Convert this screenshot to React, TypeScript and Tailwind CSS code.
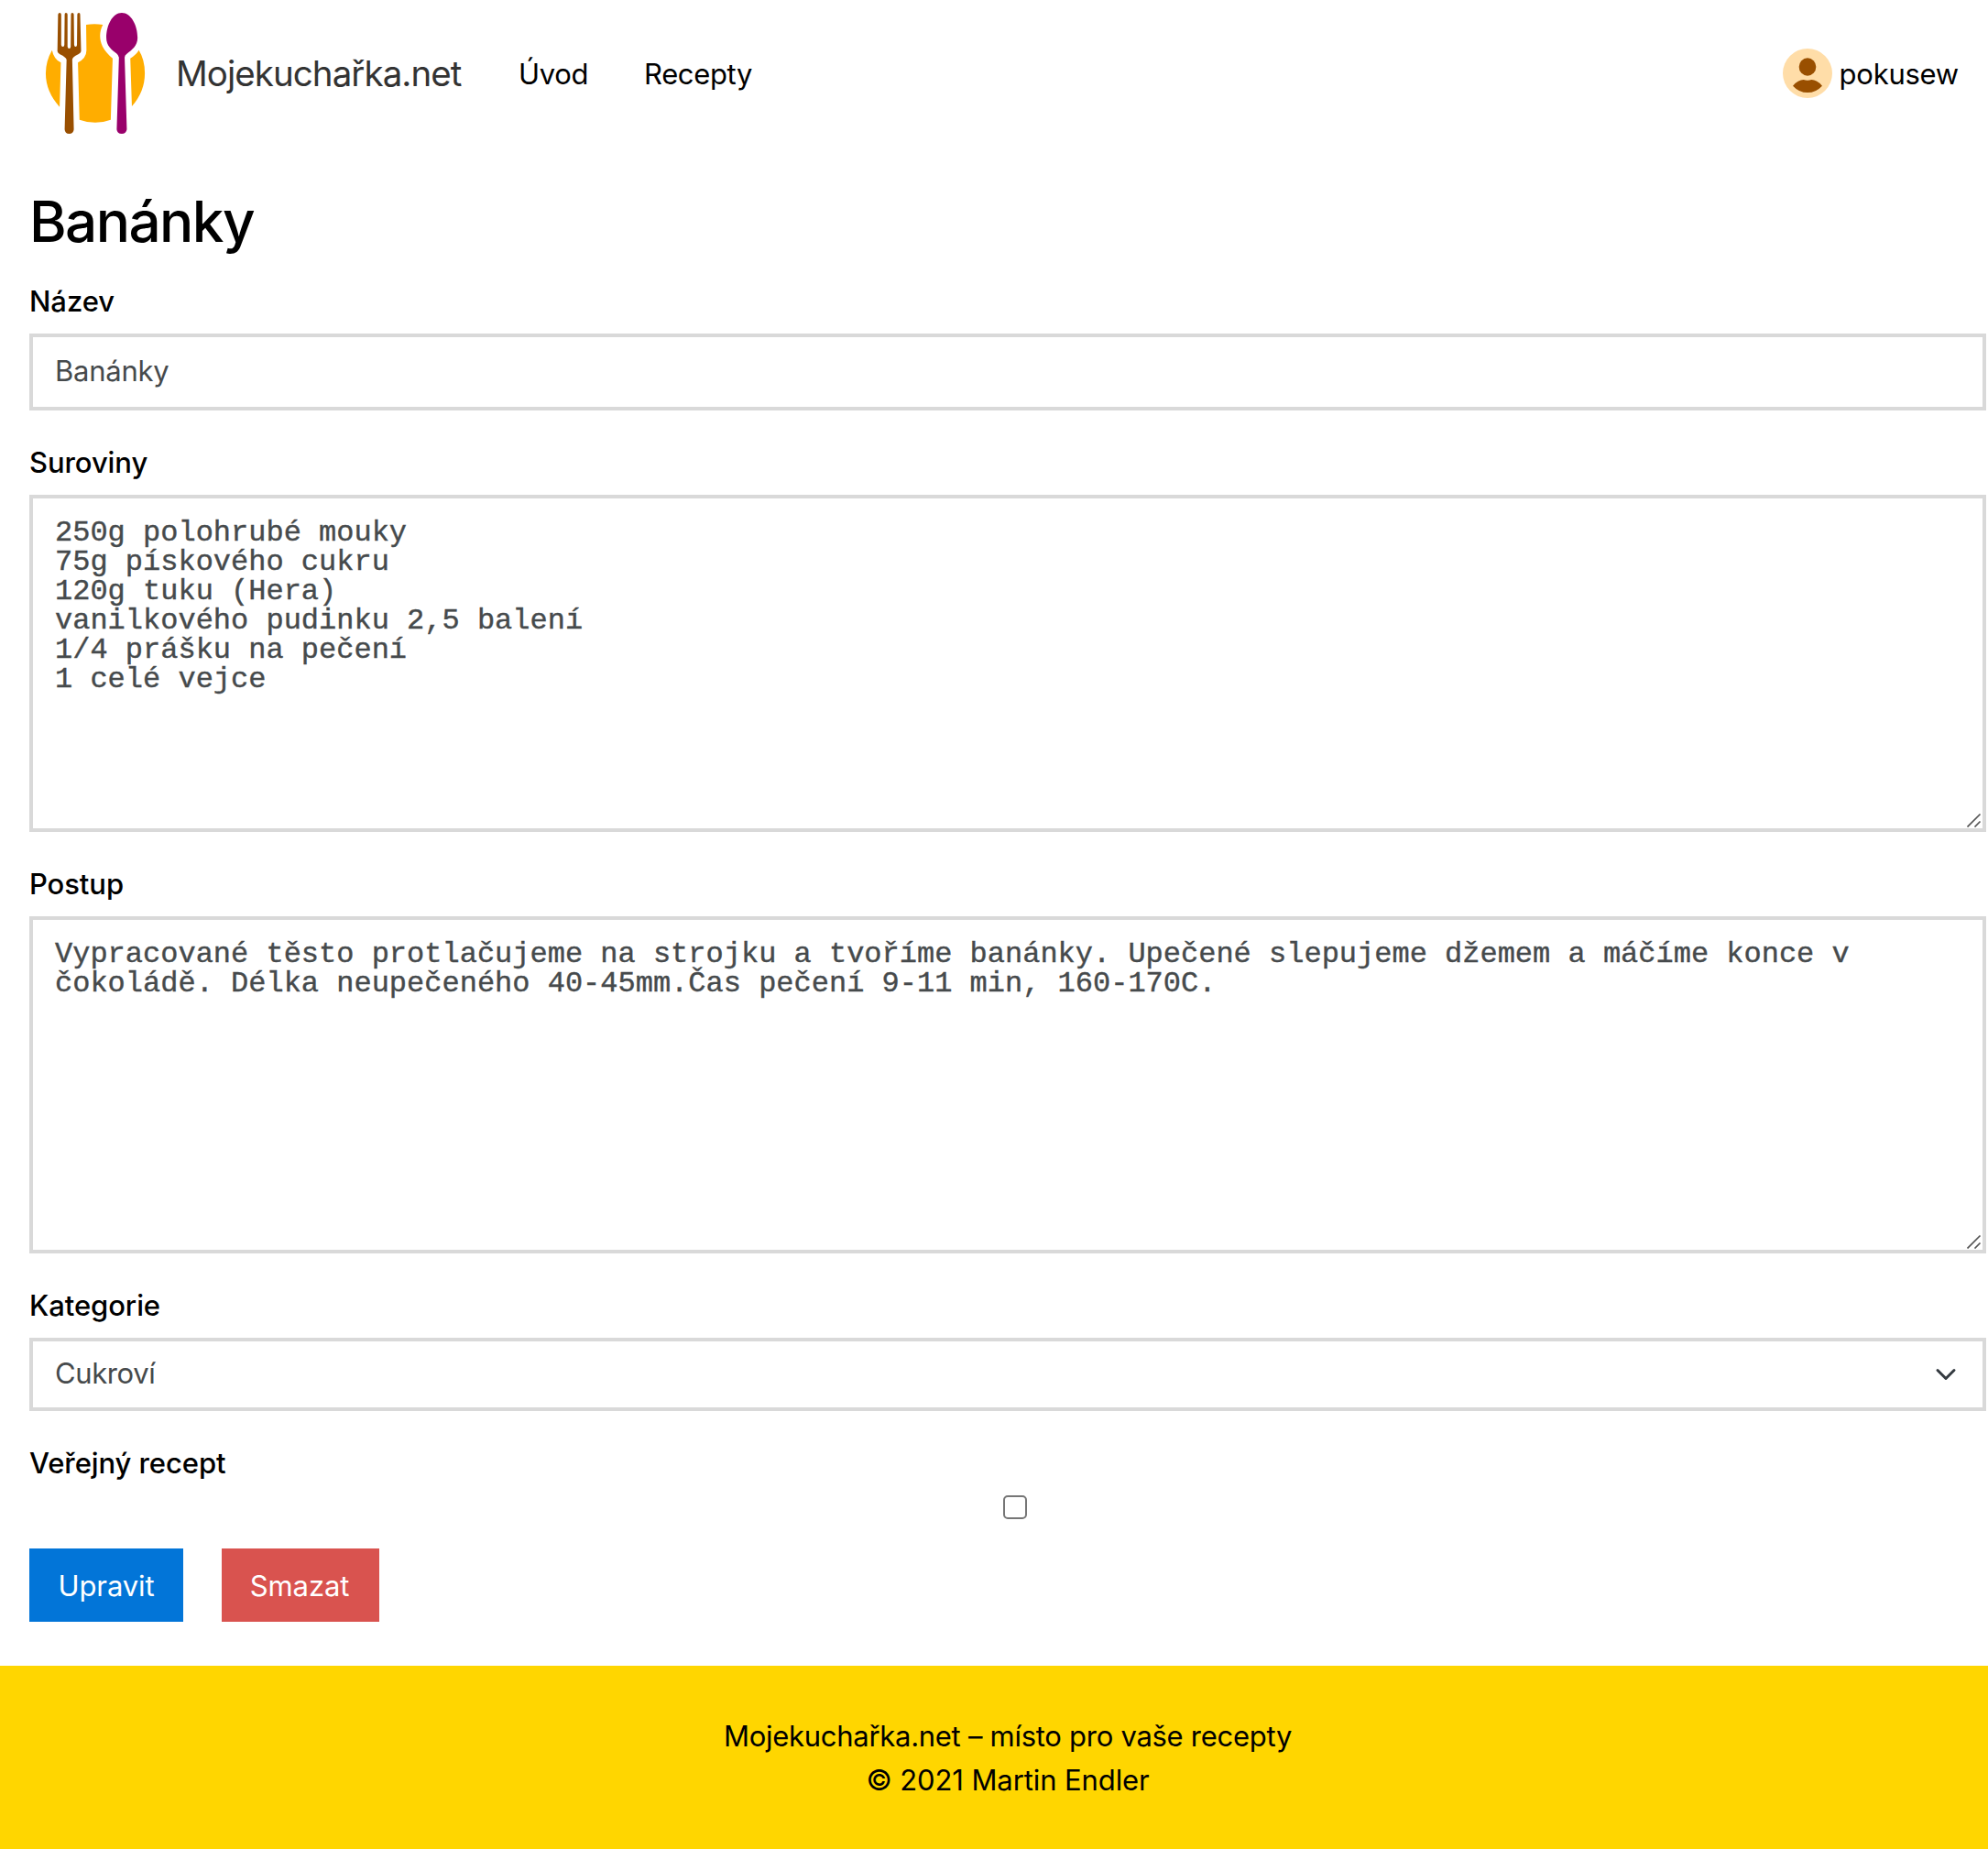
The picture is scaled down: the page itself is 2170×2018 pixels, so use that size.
import type { ReactNode } from 'react'

function Logo() {
  return (
    <svg className="block h-[136px] w-[112px] shrink-0" viewBox="48 12 112 136" aria-hidden="true">
      <g transform="scale(0.34439 0.33333)">
        <path fill="#ffad00" d="M165 164 Q145 200 145 240 Q145 300 189 350 L193 205 Q170 193 165 164 Z" />
        <path fill="#ffad00" d="M440 164 Q459 195 459 240 Q459 300 418 348 L413 191 Q433 178 440 164 Z" />
        <path fill="#ffad00" d="M273 81 Q299 76 326 81 C314 105 315 130 325 152 Q335 172 357 191 L351 392 Q302 411 252 392 L247 205 Q274 190 274 165 Z" />
        <path
          fill="#994f00"
          d="M184 47 Q185 42 189 42 Q194 42 194 47 L194 147 Q195 153 199 153 Q204 153 204 147 L205 47 Q205 42 209 42 Q214 42 214 47 L214 153 Q215 159 219 159 Q224 159 224 153 L225 47 Q225 42 229 42 Q234 42 234 47 L235 147 Q236 153 239 153 Q244 153 244 147 L245 47 Q245 42 250 42 Q254 42 254 47 L257 168 Q256 173 248 178 Q229 187 229 196 L234 424 Q233 438 219 438 Q206 438 205 424 L211 196 Q210 188 190 178 Q183 173 182 168 Z"
        />
        <path
          fill="#99006b"
          d="M386 42 C415 42 436 82 436 124 C436 150 418 164 402 176 Q395 181 395 188 L402 424 Q400 438 386 438 Q371 438 370 424 L377 188 Q376 181 369 175 C354 164 337 150 337 124 C337 82 357 42 386 42 Z"
        />
      </g>
    </svg>
  )
}

function Avatar() {
  return (
    <svg className="block size-[54px]" viewBox="78 69 162 162" aria-hidden="true">
      <circle cx="159" cy="150" r="81" fill="#ffdda8" />
      <ellipse cx="159" cy="129" rx="28" ry="29" fill="#994f00" />
      <path fill="#994f00" d="M111 191 Q128 171 146 171 Q159 175 172 171 Q190 171 207 191 Q187 213 159 213 Q131 213 111 191 Z" />
    </svg>
  )
}

function Grip() {
  return (
    <svg className="pointer-events-none absolute right-[5px] bottom-[5px] size-4" viewBox="0 0 16 16" fill="none" aria-hidden="true">
      <path d="M0.5 15.5 L14.5 1.5 M8.5 15.5 L14.5 9.5" stroke="#555" strokeWidth="1.7" />
    </svg>
  )
}

function Field({ label, htmlFor, children }: { label: string; htmlFor: string; children: ReactNode }) {
  return (
    <div className="mb-8">
      <label htmlFor={htmlFor} className="mb-[10px] block text-[31px] leading-[50px] font-medium tracking-[-0.08px]">
        {label}
      </label>
      {children}
    </div>
  )
}

function Area({ id, value }: { id: string; value: string }) {
  return (
    <div className="relative">
      <textarea
        id={id}
        defaultValue={value}
        className="block h-[368px] w-full resize-none overflow-hidden border-4 border-[#d9d9d9] bg-white px-6 pt-[22px] font-['Liberation_Mono',monospace] text-[32px] leading-8 text-[#464a4c] outline-none [-webkit-text-stroke:0.4px_#464a4c]"
      />
      <Grip />
    </div>
  )
}

const ingredients = `250g polohrubé mouky
75g pískového cukru
120g tuku (Hera)
vanilkového pudinku 2,5 balení
1/4 prášku na pečení
1 celé vejce`

const steps =
  'Vypracované těsto protlačujeme na strojku a tvoříme banánky. Upečené slepujeme džemem a máčíme konce v čokoládě. Délka neupečeného 40-45mm.Čas pečení 9-11 min, 160-170C.'

export default function App() {
  return (
    <div className="flex h-[2018px] w-full flex-col overflow-hidden bg-white font-[Inter,sans-serif] text-[31px] leading-12 text-black">
      <header className="flex h-[160px] items-center pr-8 pl-12">
        <Logo />
        <a className="ml-8 w-[314px] pb-px text-[38.5px] tracking-[-0.95px] whitespace-nowrap text-[#333]">Mojekuchařka.net</a>
        <nav className="ml-[60px] flex pt-0.5 tracking-[-0.35px]">
          <a className="w-[137px]">Úvod</a>
          <a>Recepty</a>
        </nav>
        <a className="ml-auto flex items-center gap-2 tracking-[-0.25px]">
          <Avatar />
          <span className="pt-0.5">pokusew</span>
        </a>
      </header>

      <main className="pr-0.5 pl-8">
        <h1 className="mt-[47px] text-[62px] leading-[70px] font-medium tracking-[-1.6px]">Banánky</h1>
        <form className="mt-[27px]">
          <Field label="Název" htmlFor="name">
            <input
              id="name"
              defaultValue="Banánky"
              className="block h-[84px] w-full border-4 border-[#d9d9d9] bg-white px-6 pb-[3px] tracking-[-0.25px] text-[#464a4c] outline-none"
            />
          </Field>
          <Field label="Suroviny" htmlFor="ingredients">
            <Area id="ingredients" value={ingredients} />
          </Field>
          <Field label="Postup" htmlFor="steps">
            <Area id="steps" value={steps} />
          </Field>
          <Field label="Kategorie" htmlFor="category">
            <button
              id="category"
              type="button"
              className="flex h-20 w-full items-center justify-between border-4 border-[#d9d9d9] bg-white pr-7 pl-6 tracking-[-0.4px] text-[#464a4c]"
            >
              <span className="pb-[3px]">Cukroví</span>
              <svg className="size-6" viewBox="0 0 16 16" fill="none" aria-hidden="true">
                <path d="M2 5l6 6 6-6" stroke="#343a40" strokeWidth="2" strokeLinecap="round" strokeLinejoin="round" />
              </svg>
            </button>
          </Field>
          <Field label="Veřejný recept" htmlFor="public">
            <input
              id="public"
              type="checkbox"
              className="mx-auto block size-[26px] translate-x-2 appearance-none rounded-[5px] border-2 border-[#767676] bg-white"
            />
          </Field>
          <div className="flex gap-[42px] text-white">
            <button type="button" className="h-20 w-[168px] bg-[#0275d8] pt-0.5 tracking-[-0.1px]">Upravit</button>
            <button type="button" className="h-20 w-[172px] bg-[#d9534f] pt-0.5 pr-0.5 tracking-[-0.1px]">Smazat</button>
          </div>
        </form>
      </main>

      <footer className="mt-auto h-[200px] bg-[#ffd600] pt-[53px] pl-[30px] text-center">
        <p className="tracking-[-0.28px]">Mojekuchařka.net – místo pro vaše recepty</p>
        <p className="tracking-[-0.1px]">© 2021 Martin Endler</p>
      </footer>
    </div>
  )
}
